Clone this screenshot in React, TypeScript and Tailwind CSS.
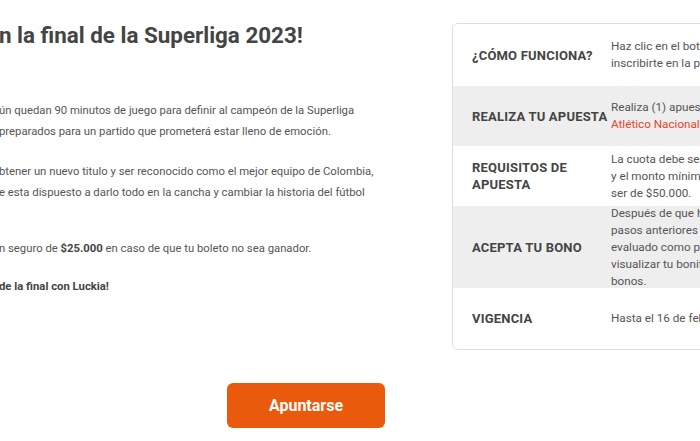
import React from 'react';

const rows = [
  {
    label: <>¿CÓMO FUNCIONA?</>,
    value: <>Haz clic en el botón "Apuntarse" para<br />inscribirte en la promoción.</>,
    h: 'h-[62px]',
    gray: false,
  },
  {
    label: <>REALIZA TU APUESTA</>,
    value: (
      <>
        Realiza (1) apuesta en el partido
        <br />
        <span className="text-[#e8452c]">Atlético Nacional vs Deportivo Pereira.</span>
      </>
    ),
    h: 'h-[60px]',
    gray: true,
  },
  {
    label: <>REQUISITOS DE<br />APUESTA</>,
    value: <>La cuota debe ser mínimo de 1.50<br />y el monto mínimo de la apuesta debe<br />ser de $50.000.</>,
    h: 'h-[60px]',
    gray: false,
  },
  {
    label: <>ACEPTA TU BONO</>,
    value: (
      <>
        Después de que hayas cumplido los
        <br />
        pasos anteriores y tu boleto sea
        <br />
        evaluado como perdedor, podrás
        <br />
        visualizar tu bonito en la sección de
        <br />
        bonos.
      </>
    ),
    h: 'h-[82px]',
    gray: true,
  },
  {
    label: <>VIGENCIA</>,
    value: <>Hasta el 16 de febrero de 2023.</>,
    h: 'h-[61px]',
    gray: false,
  },
];

// hidden part of each line sits left of the viewport
const Pre: React.FC<{ children: React.ReactNode }> = ({ children }) => (
  <span className="inline-block w-[220px] text-right">{children}</span>
);

export default function App() {
  return (
    <div className="w-[700px] h-[441px] overflow-hidden bg-white font-['Roboto',sans-serif]">
      <div className="flex pt-[20px]">
        {/* Left: promo text */}
        <div className="-ml-[221px] w-[576px] shrink-0 text-[#555]">
          <h1 className="whitespace-nowrap text-[22.4px] leading-[30px] font-bold text-[#444]">
            <Pre>¡Vive la emoción e</Pre>n la final de la Superliga 2023!
          </h1>
          <div className="mt-[50px] text-[11.3px] leading-[21px] whitespace-nowrap">
            <div><Pre>¡Es el momento de la verdad! A</Pre>ún quedan 90 minutos de juego para definir al campeón de la Superliga</div>
            <div><Pre>2023 y ambos equipos están&nbsp;</Pre>preparados para un partido que prometerá estar lleno de emoción.</div>
          </div>
          <div className="mt-[19px] text-[11.3px] leading-[21px] whitespace-nowrap">
            <div><Pre>Ambos clubes buscan o</Pre>btener un nuevo titulo y ser reconocido como el mejor equipo de Colombia,</div>
            <div><Pre>por lo que cada uno qu</Pre>e esta dispuesto a darlo todo en la cancha y cambiar la historia del fútbol</div>
            <div><Pre>colombiano.</Pre></div>
          </div>
          <div className="mt-[14px] text-[11.3px] leading-[21px] whitespace-nowrap">
            <Pre>Además, Luckia te ofrece u</Pre>n seguro de <b className="text-[#444]">$25.000</b> en caso de que tu boleto no sea ganador.
          </div>
          <div className="mt-[17px] text-[11.3px] leading-[21px] whitespace-nowrap font-bold text-[#444]">
            <Pre>¡Disfruta&nbsp;</Pre>de la final con Luckia!
          </div>
        </div>

        {/* Right: steps card */}
        <div className="ml-[97px] mt-[3px] w-[360px] shrink-0 overflow-hidden rounded-md border border-[#dddddd]">
          {rows.map((r, i) => (
            <div key={i} className={`flex items-center ${r.h} ${r.gray ? 'bg-[#eeeeee]' : 'bg-white'}`}>
              <div className="w-[158px] shrink-0 pl-[19px] text-[13px] leading-[17px] font-bold tracking-[0.2px] text-[#444]">
                {r.label}
              </div>
              <div className="whitespace-nowrap text-[11.7px] leading-[17px] text-[#555]">{r.value}</div>
            </div>
          ))}
        </div>
      </div>

      <div className="mt-[33px] pl-[227px]">
        <button className="h-[45px] w-[158px] rounded-md bg-[#e95a0c] text-[16px] font-bold text-white">
          Apuntarse
        </button>
      </div>
    </div>
  );
}
